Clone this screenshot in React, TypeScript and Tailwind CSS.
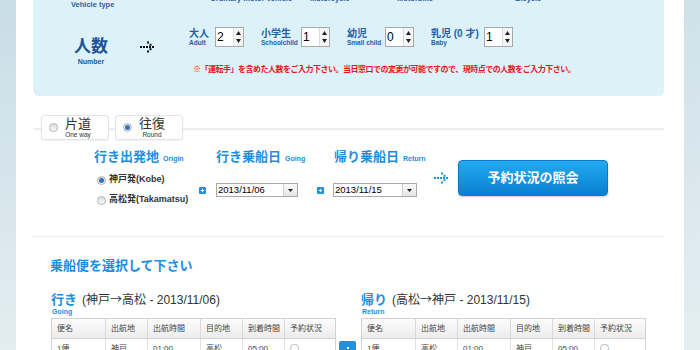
import React from "react";

//small dotted arrow used between steps
function DotArrow({ color }: { color: string }) {
  const dots = [
    [1, 6], [4, 6], [7, 6], [10, 6], [13, 6],
    [8, 1.5], [10.5, 3.8], [10.5, 8.2], [8, 10.5],
  ];
  return (
    <svg width="15" height="12" viewBox="0 0 15 12">
      {dots.map(([x, y], i) => (
        <rect key={i} x={x - 1} y={y - 1} width="2" height="2" fill={color} />
      ))}
    </svg>
  );
}

function Radio({ checked }: { checked?: boolean }) {
  return (
    <span className="flex h-[9px] w-[9px] shrink-0 items-center justify-center rounded-full border border-[#b3b3b3] bg-linear-to-b from-[#dcdcdc] to-[#fafafa]">
      {checked && <span className="h-[5px] w-[5px] rounded-full bg-[#2a74c2]" />}
    </span>
  );
}

function NumBox({ value }: { value: string }) {
  return (
    <div className="flex h-[20px] w-[29px] border border-[#a9a9a9] bg-white">
      <div className="flex-1 pl-[1px] text-[12px] leading-[18px] text-black">{value}</div>
      <div className="flex w-[10px] flex-col items-center justify-between border-l border-[#dadada] bg-[#f5f5f5] py-[3px]">
        <svg width="5" height="4" viewBox="0 0 5 4"><path d="M2.5 0 L5 4 L0 4 Z" fill="#222" /></svg>
        <svg width="5" height="4" viewBox="0 0 5 4"><path d="M0 0 L5 0 L2.5 4 Z" fill="#222" /></svg>
      </div>
    </div>
  );
}

function Group({ jp, en, w, value }: { jp: string; en: string; w: string; value: string }) {
  return (
    <div className="flex items-start">
      <div className={`${w} mt-[1px] font-bold text-[#2362a8]`}>
        <div className="whitespace-nowrap text-[10px] leading-[11px]">{jp}</div>
        <div className="whitespace-nowrap text-[6.5px] leading-[8px]">{en}</div>
      </div>
      <NumBox value={value} />
    </div>
  );
}

function Tab({ checked, jp, en }: { checked?: boolean; jp: string; en: string }) {
  return (
    <div className="flex h-[25px] w-[68px] items-center rounded-[3px] border border-[#e3e3e3] bg-white shadow-[0_1px_2px_rgba(0,0,0,0.06)]">
      <div className="ml-[7px]">
        <Radio checked={checked} />
      </div>
      <div className="w-[40px] text-center text-[#333]">
        <div className="text-[13px] leading-[14px]">{jp}</div>
        <div className="text-[6.5px] leading-[8px]">{en}</div>
      </div>
    </div>
  );
}

function PlusSquare() {
  return (
    <svg width="7" height="7" viewBox="0 0 7 7" className="shrink-0">
      <rect width="7" height="7" rx="1" fill="#1d92e2" />
      <path d="M3.5 1.8 V5.2 M1.8 3.5 H5.2" stroke="#fff" strokeWidth="1" />
    </svg>
  );
}

function DateSelect({ value, w }: { value: string; w: string }) {
  return (
    <div className={`${w} flex h-[14px] border border-[#a9a9a9] bg-white`}>
      <div className="flex-1 pl-[1px] text-[9.5px] leading-[12px] text-black">{value}</div>
      <div className="flex w-[14px] items-center justify-center border-l border-[#d0d0d0] bg-linear-to-b from-[#fafafa] to-[#e6e6e6]">
        <svg width="5" height="3" viewBox="0 0 5 3"><path d="M0 0 L5 0 L2.5 3 Z" fill="#222" /></svg>
      </div>
    </div>
  );
}

const heads = ["便名", "出航地", "出航時間", "目的地", "到着時間", "予約状況"];

function Schedule({ row }: { row: string[] }) {
  return (
    <div className="w-[285px] border border-[#d2d2d2] text-[8px] text-[#444]">
      <div className="grid h-[20px] grid-cols-[54px_42px_53px_42px_42px_1fr] border-b border-[#d2d2d2] bg-linear-to-b from-[#fcfcfc] to-[#ececec]">
        {heads.map((h, i) => (
          <div key={h} className={`pl-[5px] leading-[19px] ${i < 5 ? "border-r border-[#dadada]" : ""}`}>
            {h}
          </div>
        ))}
      </div>
      <div className="grid h-[20px] grid-cols-[54px_42px_53px_42px_42px_1fr] bg-white">
        {row.map((c, i) => (
          <div
            key={i}
            className={`pl-[5px] leading-[19px] ${i < 5 ? "border-r border-[#e2e2e2]" : "font-['Noto_Sans_CJK_JP',sans-serif] text-[9px]"}`}
          >
            {c}
          </div>
        ))}
      </div>
    </div>
  );
}

function Title({ jp, en, from, to, date }: { jp: string; en: string; from: string; to: string; date: string }) {
  return (
    <>
      <div className="flex items-baseline whitespace-nowrap leading-[15px]">
        <span className="text-[13px] font-bold text-[#1b8ee0]">{jp}</span>
        <span className="ml-[5px] text-[12px] text-[#333]">
          ({from}
          <span className="font-['Noto_Sans_CJK_JP',sans-serif]">→</span>
          {to} - {date})
        </span>
      </div>
      <div className="ml-[1px] text-[7px] font-bold leading-[8px] text-[#1b8ee0]">{en}</div>
    </>
  );
}

export default function App() {
  return (
    <div className="flex h-[350px] overflow-hidden font-['Liberation_Sans','Noto_Sans_CJK_JP',sans-serif]">
      <div className="w-[16px] shrink-0 bg-linear-to-b from-[#c9dde6] to-[#e3edf1]" />

      <div className="w-[668px] shrink-0 bg-white pl-[17px] pr-[20px]">
        {/* people count panel */}
        <div className="h-[96px] rounded-b-[6px] bg-[#ddf1f8]">
          <div className="flex h-[14px] text-[7.5px] font-bold leading-[9px] text-[#2b5f9f]">
            <div className="ml-[38px] w-[139px]">Vehicle type</div>
            <div className="-mt-[6px] w-[100px]">Ordinary motor vehicle</div>
            <div className="-mt-[6px] w-[87px]">Motorcycle</div>
            <div className="-mt-[6px] w-[118px]">Motorbike</div>
            <div className="-mt-[6px]">Bicycle</div>
          </div>

          <div className="mt-[13px] flex items-start">
            <div className="ml-[27px] mt-[10px] w-[62px] text-center font-bold text-[#1d5597]">
              <div className="text-[17px] leading-[20px]">人数</div>
              <div className="text-[7px] leading-[10px]">Number</div>
            </div>
            <div className="ml-[18px] mt-[14px]">
              <DotArrow color="#111" />
            </div>
            <div className="ml-[34px] flex flex-col">
              <div className="flex items-start gap-[17px]">
                <Group jp="大人" en="Adult" w="w-[26px]" value="2" />
                <Group jp="小学生" en="Schoolchild" w="w-[40px]" value="1" />
                <Group jp="幼児" en="Small child" w="w-[38px]" value="0" />
                <Group jp="乳児 (0 才)" en="Baby" w="w-[53px]" value="1" />
              </div>
              <div className="ml-[4px] mt-[18px] whitespace-nowrap text-[8px] font-bold leading-[10px] tracking-[-0.5px] text-[#e8161b]">
                ※「運転手」を含めた人数をご入力下さい。当日窓口での変更が可能ですので、現時点での人数をご入力下さい。
              </div>
            </div>
          </div>
        </div>

        {/* trip type tabs */}
        <div className="mt-[21px]">
          <div className="h-[13px] border-b-2 border-[#efefef]" />
          <div className="relative -mt-[15px] ml-[8px] flex gap-[6px]">
            <Tab jp="片道" en="One way" />
            <Tab checked jp="往復" en="Round" />
          </div>
        </div>

        {/* form row */}
        <div className="ml-[61px] mt-[9px] flex items-start">
          <div className="w-[105px]">
            <div className="whitespace-nowrap text-[13px] font-bold leading-[16px] text-[#1b8ee0]">
              行き出発地<span className="ml-[4px] text-[7px]">Origin</span>
            </div>
            <div className="ml-[3px] mt-[7px] flex h-[12px] items-center gap-[3px] text-[9px] font-bold text-[#333]">
              <Radio checked />
              <span>神戸発(Kobe)</span>
            </div>
            <div className="ml-[3px] mt-[8px] flex h-[12px] items-center gap-[3px] whitespace-nowrap text-[9px] font-bold text-[#333]">
              <Radio />
              <span>高松発(Takamatsu)</span>
            </div>
          </div>

          <div className="w-[118px]">
            <div className="ml-[17px] whitespace-nowrap text-[13px] font-bold leading-[16px] text-[#1b8ee0]">
              行き乗船日<span className="ml-[4px] text-[7px]">Going</span>
            </div>
            <div className="mt-[16px] flex items-center">
              <PlusSquare />
              <div className="ml-[10px]">
                <DateSelect value="2013/11/06" w="w-[82px]" />
              </div>
            </div>
          </div>

          <div className="w-[117px]">
            <div className="ml-[17px] whitespace-nowrap text-[13px] font-bold leading-[16px] text-[#1b8ee0]">
              帰り乗船日<span className="ml-[4px] text-[7px]">Return</span>
            </div>
            <div className="mt-[16px] flex items-center">
              <PlusSquare />
              <div className="ml-[9px]">
                <DateSelect value="2013/11/15" w="w-[84px]" />
              </div>
            </div>
          </div>

          <div className="mt-[23px] w-[15px]">
            <DotArrow color="#1d92e2" />
          </div>

          <button
            type="button"
            className="ml-[9px] mt-[11px] h-[36px] w-[150px] rounded-[4px] border border-[#0b79c4] bg-linear-to-b from-[#22abf1] to-[#0a7fd1] text-[13px] font-bold text-white shadow-[0_1px_2px_rgba(0,0,0,0.2)]"
          >
            予約状況の照会
          </button>
        </div>

        <div className="mt-[30px] border-t border-dotted border-[#dddddd]" />

        <div className="ml-[17px] mt-[21px] text-[13px] font-bold leading-[15px] text-[#1b8ee0]">
          乗船便を選択して下さい
        </div>

        {/* schedule tables */}
        <div className="ml-[18px] mt-[18px] flex items-start">
          <div className="w-[285px]">
            <Title jp="行き" en="Going" from="神戸" to="高松" date="2013/11/06" />
            <div className="mt-[2px]">
              <Schedule row={["1便", "神戸", "01:00", "高松", "05:00", "○"]} />
            </div>
          </div>

          <div className="w-[25px]">
            <div className="ml-[3px] mt-[50px] flex h-[14px] w-[17px] items-center justify-center rounded-[2px] bg-[#1d92e2]">
              <span className="h-[2px] w-[2px] bg-white" />
            </div>
          </div>

          <div className="w-[285px]">
            <Title jp="帰り" en="Return" from="高松" to="神戸" date="2013/11/15" />
            <div className="mt-[2px]">
              <Schedule row={["1便", "高松", "01:00", "神戸", "05:00", "○"]} />
            </div>
          </div>
        </div>
      </div>

      <div className="w-[16px] shrink-0 bg-linear-to-b from-[#cfe1e9] to-[#e4eef2]" />
    </div>
  );
}
